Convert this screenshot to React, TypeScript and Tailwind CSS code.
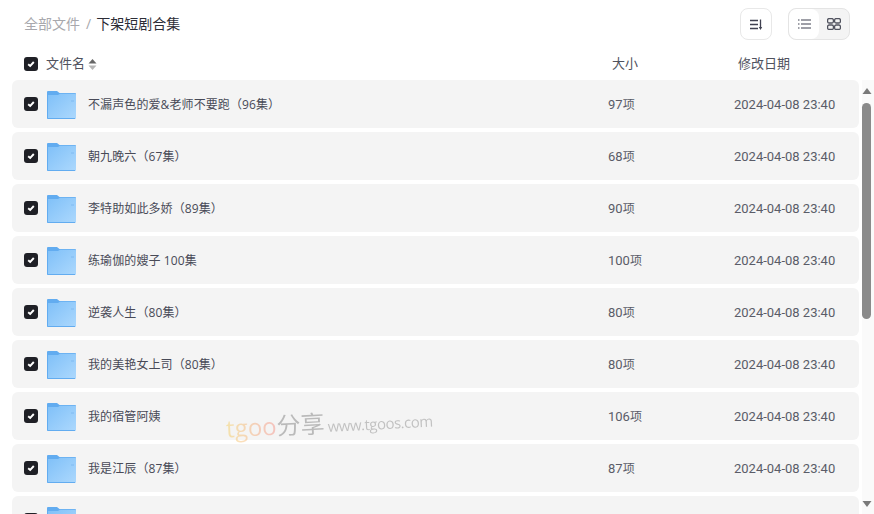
import React from 'react';

const rows = [
  { name: '不漏声色的爱&老师不要跑（96集）', count: '97' },
  { name: '朝九晚六（67集）', count: '68' },
  { name: '李特助如此多娇（89集）', count: '90' },
  { name: '练瑜伽的嫂子 100集', count: '100' },
  { name: '逆袭人生（80集）', count: '80' },
  { name: '我的美艳女上司（80集）', count: '80' },
  { name: '我的宿管阿姨', count: '106' },
  { name: '我是江辰（87集）', count: '87' },
  { name: '', count: '' },
];

const Check = () => (
  <div className="w-[14px] h-[14px] rounded-[3px] bg-[#1f2026] flex items-center justify-center shrink-0">
    <svg width="10" height="10" viewBox="0 0 10 10" fill="none">
      <path d="M2.200 5.200 4.200 7 7.800 3" stroke="#fff" strokeWidth="1.900" />
    </svg>
  </div>
);

const Folder = () => (
  <svg width="29" height="28" viewBox="0 0 29 28" className="shrink-0">
    <defs>
      <linearGradient id="fold" x1="0" y1="0" x2="1" y2="1">
        <stop offset="0" stopColor="#7fc0f8" />
        <stop offset="1" stopColor="#acd8fd" />
      </linearGradient>
    </defs>
    <path d="M0 1a1 1 0 0 1 1-1h9l2.500 2H28a1 1 0 0 1 1 1v5H0z" fill="#62acf0" />
    <path d="M0 4h11l2-1.200h15a1 1 0 0 1 1 1V27a1 1 0 0 1-1 1H1a1 1 0 0 1-1-1z" fill="url(#fold)" />
    <path d="M0 4v23a1 1 0 0 0 1 1h27v-1H1V4z" fill="#62acf0" />
    <rect x="24" y="9" width="3" height="2" fill="#8cc4f6" />
  </svg>
);

export default function App() {
  return (
    <div className="relative w-[874px] h-[514px] overflow-hidden bg-white text-[#484a57] font-['Open_Sans','Noto_Sans_CJK_SC',sans-serif] text-[12px]">
      <div className="h-[48px] pl-6 pr-6 flex items-center">
        <div className="flex items-center -mt-[2px]">
          <span className="text-[14px] text-[#a8a8ad]">全部文件</span>
          <span className="text-[14px] text-[#a8a8ad] ml-[6px] mr-[5px]">/</span>
          <span className="text-[14px] text-[#2c2d36]">下架短剧合集</span>
        </div>
        <div className="ml-auto flex items-center gap-4">
          <button className="w-8 h-8 rounded-lg border border-[#e8e8e8] flex items-center justify-center">
            <svg width="14" height="13" viewBox="0 0 14 13" fill="none" stroke="#3f4150" strokeWidth="1.300">
              <path d="M1 2.500h8M1 6.500h8M1 10.500h8M11.500 1.500v8.500" />
              <path d="M9.800 9h3.400l-1.700 3z" fill="#3f4150" stroke="none" />
            </svg>
          </button>
          <div className="w-[62px] h-8 rounded-lg border border-[#e4e4e4] bg-[#f4f4f4] flex overflow-hidden">
            <div className="w-[30px] bg-white rounded-lg flex items-center justify-center">
              <svg width="14" height="12" viewBox="0 0 14 12" fill="none" stroke="#3f4150" strokeWidth="1.200">
                <path d="M4 2h10M4 6h10M4 10h10M1 2h1.500M1 6h1.500M1 10h1.500" />
              </svg>
            </div>
            <div className="flex-1 flex items-center justify-center">
              <svg width="14" height="12" viewBox="0 0 14 12" fill="none" stroke="#50525e" strokeWidth="1.300">
                <rect x="0.600" y="0.600" width="5.800" height="4.400" rx="1.500" />
                <rect x="7.600" y="0.600" width="5.800" height="4.400" rx="1.500" />
                <rect x="0.600" y="7" width="5.800" height="4.400" rx="1.500" />
                <rect x="7.600" y="7" width="5.800" height="4.400" rx="1.500" />
              </svg>
            </div>
          </div>
        </div>
      </div>

      <div className="h-[32px] pl-6 flex items-center text-[13px] text-[#50525e]">
        <Check />
        <span className="ml-2">文件名</span>
        <svg width="9" height="13" viewBox="0 0 9 13" className="ml-[3px] shrink-0">
          <path d="M4.500 1 8.500 5.500H.5z" fill="#666" />
          <path d="M4.500 12 8.500 7.500H.5z" fill="#b5b5b5" />
        </svg>
        <span className="ml-[515px] w-[126px]">大小</span>
        <span>修改日期</span>
      </div>

      <div className="flex h-[434px]">
        <div className="w-[847px] ml-3 shrink-0 flex flex-col gap-1">
          {rows.map((row, i) => (
            <div key={i} className="h-[48px] shrink-0 rounded-md bg-[#f4f4f4] flex items-center pl-3">
              <Check />
              <div className="ml-[9px] mt-px"><Folder /></div>
              <span className="ml-[12px] w-[520px] mt-[2px] truncate tracking-[0.1px]">{row.name}</span>
              {row.name && (
                <>
                  <span className="w-[126px] mt-[2px] text-[#5a5c68]">
                    <span className="font-['Roboto'] text-[13px]">{row.count}</span>项
                  </span>
                  <span className="mt-[2px] font-['Roboto'] text-[13px] text-[#5a5c68]">2024-04-08 23:40</span>
                </>
              )}
            </div>
          ))}
        </div>
        <div className="ml-[3px] w-[12px] bg-[#fafafa] flex flex-col items-start">
          <svg width="10" height="7" viewBox="0 0 10 7" className="mt-2 shrink-0">
            <path d="M5 0 9.500 6H.5z" fill="#7a7a7a" />
          </svg>
          <div className="mt-[8px] w-[9px] h-[216px] rounded-[5px] bg-[#8a8a8a] shrink-0" />
          <svg width="10" height="7" viewBox="0 0 10 7" className="mt-[181px] shrink-0">
            <path d="M5 7 9.500 1H.5z" fill="#7a7a7a" />
          </svg>
        </div>
      </div>

      {/* watermark */}
      <div className="absolute left-[226px] top-[405px] flex items-baseline -rotate-3 opacity-40 whitespace-nowrap">
        <span className="text-[24px] bg-gradient-to-r from-[#f5c842] to-[#f47a6e] bg-clip-text text-transparent">tgoo</span>
        <span className="text-[24px] text-[#666]">分享</span>
        <span className="ml-[3px] text-[15px] tracking-[-0.5px] text-[#777]">www.tgoos.com</span>
      </div>
    </div>
  );
}
